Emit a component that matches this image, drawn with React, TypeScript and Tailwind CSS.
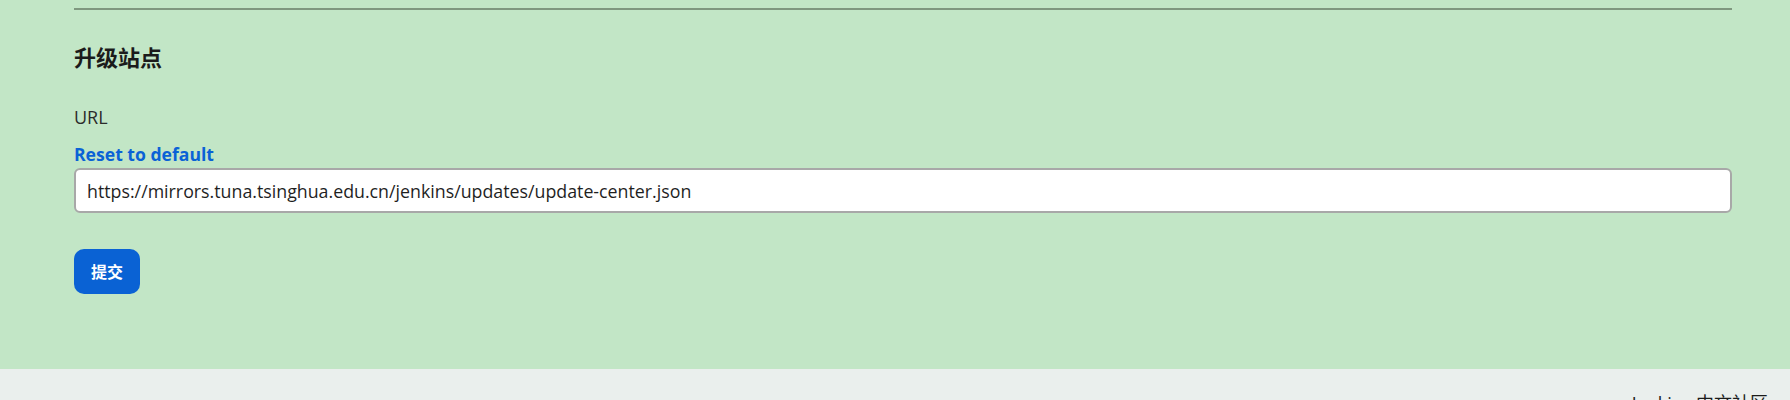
import React from "react";

const UpdateSitePage: React.FC = () => {
  const [url, setUrl] = React.useState(
    "https://mirrors.tuna.tsinghua.edu.cn/jenkins/updates/update-center.json"
  );

  return (
    <div className="min-h-[400px] font-['Open_Sans','Noto_Sans_CJK_SC',sans-serif] text-[#1f1f1f]">
      <div className="h-[369px] bg-[#c2e6c6] pl-[74px] pr-[58px] pt-[8px]">
        <div className="h-[2px] bg-[#7f977f]" />

        <h2 className="mt-[32px] text-[22px] leading-[30px] font-bold text-[#1b1b1b]">
          升级站点
        </h2>

        <p className="mt-[33px] text-[18px] leading-[24px] text-[#2b2b2b]">URL</p>

        <a
          href="#"
          className="mt-[13px] block w-fit text-[17.6px] leading-[24px] font-bold text-[#0a62d6]"
          onClick={(e) => {
            e.preventDefault();
            setUrl("https://updates.jenkins.io/update-center.json");
          }}
        >
          Reset to default
        </a>

        <input
          value={url}
          onChange={(e) => setUrl(e.target.value)}
          className="mt-[2px] block h-[45px] w-full rounded-[6px] border-2 border-[#a8a8a8] bg-white pl-[11px] text-[17.8px] text-[#1f1f1f] outline-none"
        />

        <button className="mt-[36px] flex h-[45px] w-[66px] items-center justify-center rounded-[10px] bg-[#0a62d4] text-[16px] font-bold text-white">
          提交
        </button>
      </div>

      <div className="flex h-[31px] justify-end overflow-hidden bg-[#eaefed] pr-[22px]">
        <span className="mt-[22px] text-[18px] leading-[24px] text-[#1b1b1b]">
          Jenkins 中文社区
        </span>
      </div>
    </div>
  );
};

export default function App() {
  return <UpdateSitePage />;
}
